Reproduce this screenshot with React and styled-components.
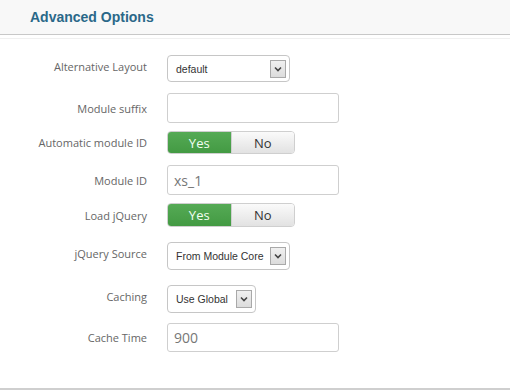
import styled, { createGlobalStyle } from 'styled-components'

const Global = createGlobalStyle`
  body {
    margin: 0;
    background: #fff;
    font-family: "Open Sans", "Liberation Sans", sans-serif;
  }
`

const Page = styled.div`
  width: 510px;
  height: 391px;
  overflow: hidden;
`

const Header = styled.div`
  height: 34px;
  background: #f8f8f8;
  border-bottom: 1px solid #c8c8c8;
  display: flex;
  align-items: center;
  padding-left: 30px;
`

const Title = styled.h3`
  margin: 0;
  font-family: "Liberation Sans", Arial, sans-serif;
  font-weight: bold;
  font-size: 14px;
  color: #2a6889;
`

const Form = styled.div`
  border-top: 1px solid #f0f0f0;
  margin-top: 3px;
  padding-top: 16px;
  height: 333px;
  border-bottom: 2px solid #cfcfcf;
`

const Row = styled.div`
  display: grid;
  grid-template-columns: 147px auto;
  column-gap: 20px;
  align-items: center;
  margin-bottom: ${p => p.$gap}px;
`

const Label = styled.label`
  text-align: right;
  font-size: 11px;
  color: #666;
  margin-top: ${p => (p.$raise ? -5 : 0)}px;
`

const Select = styled.div`
  width: ${p => p.$w}px;
  height: ${p => p.$h}px;
  box-sizing: border-box;
  border: 1px solid #c6c6c6;
  border-radius: 4px;
  display: flex;
  align-items: center;
  justify-content: space-between;
  padding: 0 3px 0 8px;
  font-family: "Liberation Sans", Arial, sans-serif;
  font-size: 10.5px;
  color: #333;
`

const Arrow = styled.span`
  width: 16px;
  height: 18px;
  box-sizing: border-box;
  border: 1px solid #a9a9a9;
  background: linear-gradient(#f0f0f0, #dcdcdc);
  display: flex;
  align-items: center;
  justify-content: center;
`

const Input = styled.div`
  width: 172px;
  height: ${p => p.$h}px;
  box-sizing: border-box;
  border: 1px solid #cfcfcf;
  border-radius: 3px;
  display: flex;
  align-items: center;
  padding-left: 6px;
  font-size: 14px;
  color: #777;
`

const Toggle = styled.div`
  display: flex;
  width: 128px;
  height: ${p => p.$h}px;
  border-radius: 4px;
  overflow: hidden;
  border: 1px solid #cfcfcf;
  box-sizing: border-box;
`

const Option = styled.div`
  flex: 1;
  display: flex;
  align-items: center;
  justify-content: center;
  font-size: 13px;
  color: ${p => (p.$on ? '#f2fff2' : '#333')};
  background: ${p =>
    p.$on ? 'linear-gradient(#55aa55, #439a43)' : 'linear-gradient(#fafafa, #e2e2e2)'};
  border-left: ${p => (p.$on ? 'none' : '1px solid #d0d0d0')};
`

const Chevron = () => (
  <svg width="8" height="6" viewBox="0 0 8 6">
    <path d="M1 1.5 L4 4.5 L7 1.5" fill="none" stroke="#444" strokeWidth="1.6" />
  </svg>
)

const Dropdown = ({ w, h, value }) => (
  <Select $w={w} $h={h}>
    <span>{value}</span>
    <Arrow><Chevron /></Arrow>
  </Select>
)

const YesNo = ({ h }) => (
  <Toggle $h={h}>
    <Option $on>Yes</Option>
    <Option>No</Option>
  </Toggle>
)

export default function App() {
  return (
    <Page>
      <Global />
      <Header>
        <Title>Advanced Options</Title>
      </Header>
      <Form>
        <Row $gap={11}>
          <Label $raise>Alternative Layout</Label>
          <Dropdown w={123} h={27} value="default" />
        </Row>
        <Row $gap={8}>
          <Label>Module suffix</Label>
          <Input $h={30} />
        </Row>
        <Row $gap={11}>
          <Label>Automatic module ID</Label>
          <YesNo h={23} />
        </Row>
        <Row $gap={8}>
          <Label>Module ID</Label>
          <Input $h={30}>xs_1</Input>
        </Row>
        <Row $gap={15}>
          <Label>Load jQuery</Label>
          <YesNo h={24} />
        </Row>
        <Row $gap={15}>
          <Label $raise>jQuery Source</Label>
          <Dropdown w={123} h={28} value="From Module Core" />
        </Row>
        <Row $gap={10}>
          <Label $raise>Caching</Label>
          <Dropdown w={89} h={28} value="Use Global" />
        </Row>
        <Row $gap={0}>
          <Label>Cache Time</Label>
          <Input $h={29}>900</Input>
        </Row>
      </Form>
    </Page>
  )
}
